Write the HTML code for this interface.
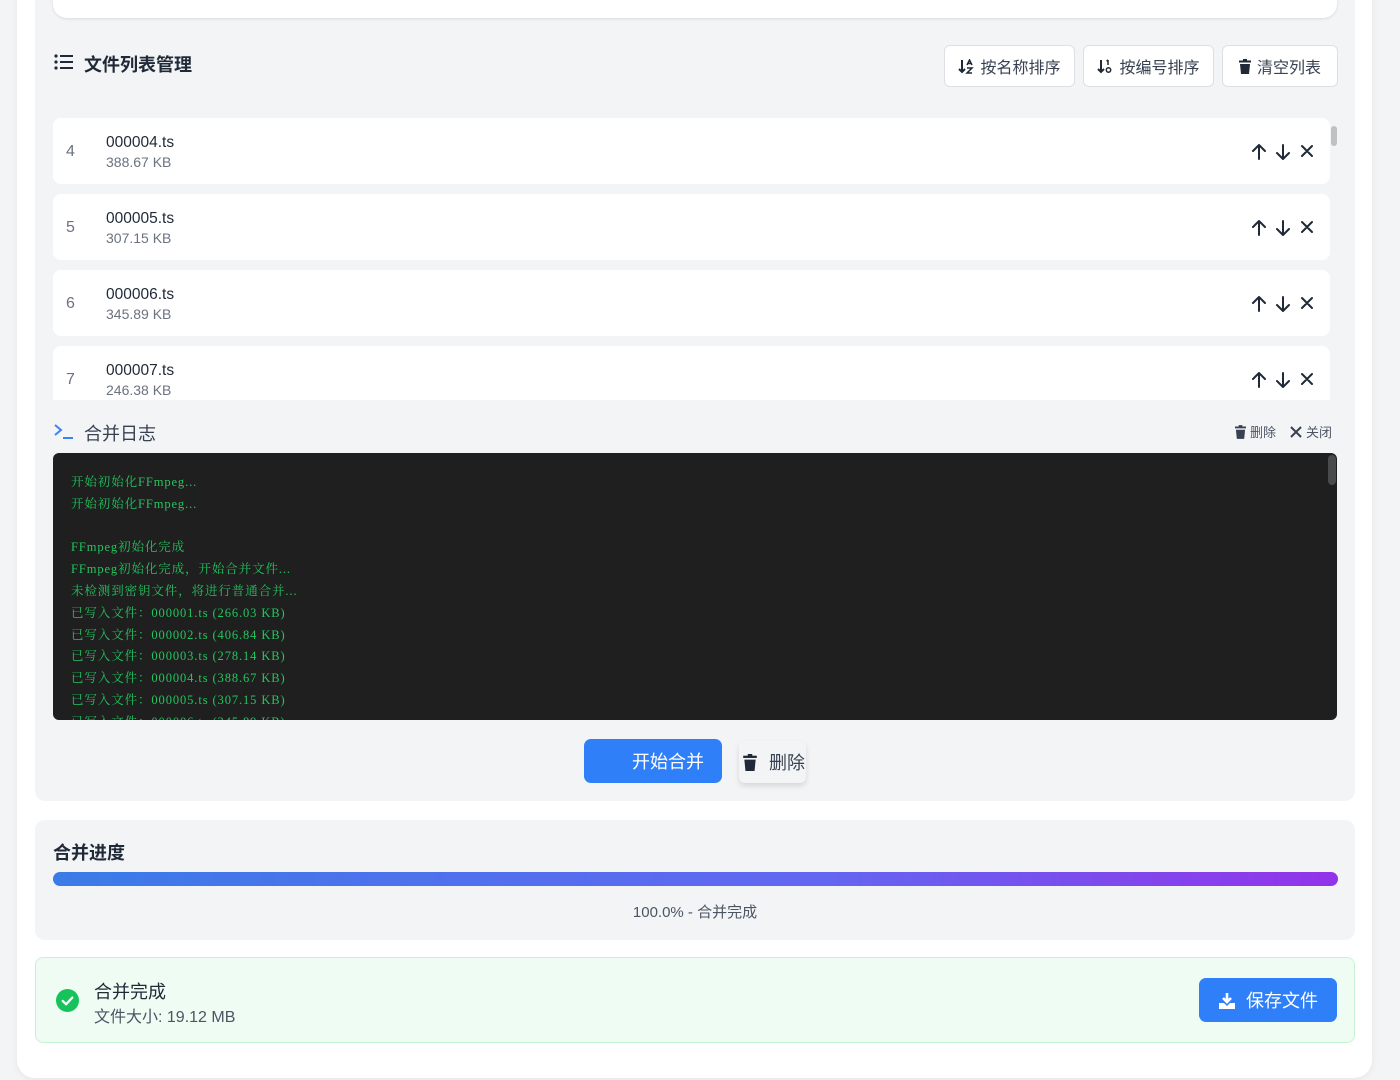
<!DOCTYPE html>
<html><head><meta charset="utf-8"><style>
*{box-sizing:border-box;margin:0;padding:0}
body{width:1400px;height:1080px;background:#f3f4f6;font-family:"Liberation Sans","Noto Sans CJK SC",sans-serif;position:relative;overflow:hidden;color:#1f2937}
.abs{position:absolute}
.card{left:17px;top:-20px;width:1355px;height:1098px;background:#fff;border-radius:0 0 18px 18px;box-shadow:0 2px 8px rgba(0,0,0,.06)}
.panel{left:35px;top:-10px;width:1320px;height:811px;background:#f3f4f6;border-radius:0 0 10px 10px}
.topcard{left:53px;top:-10px;width:1284px;height:28px;background:#fff;border-radius:0 0 14px 14px;box-shadow:0 1px 3px rgba(0,0,0,.1)}
.btn{top:45px;height:42px;background:#fff;border:1px solid #dcdfe4;border-radius:6px;font-size:16px;color:#374151;display:flex;align-items:center;justify-content:center;gap:6px;white-space:nowrap}
.item{left:53px;width:1277px;height:66px;background:#fff;border-radius:8px}
.item .n{position:absolute;left:13px;top:25px;font-size:16px;color:#6b7280}
.item .f{position:absolute;left:53px;top:16px;font-size:15.5px;color:#1f2937}
.item .s{position:absolute;left:53px;top:36px;font-size:14px;color:#6b7280}
.term{left:53px;top:453px;width:1284px;height:267px;background:#1f1f1f;border-radius:6px;overflow:hidden;padding:19px 18px;font-family:"Liberation Serif","Noto Serif CJK SC",serif;font-size:12.5px;line-height:21.8px;color:#22c55e;letter-spacing:0.9px;white-space:nowrap}
</style></head><body>
<div class="abs card"></div>
<div class="abs panel"></div>
<div class="abs topcard"></div>
<svg class="abs" style="left:54px;top:54px" width="20" height="16" viewBox="0 0 20 16"><g fill="#1f2937"><circle cx="2" cy="2" r="1.6"/><circle cx="2" cy="8" r="1.6"/><circle cx="2" cy="14" r="1.6"/><rect x="6" y="1" width="13" height="2"/><rect x="6" y="7" width="13" height="2"/><rect x="6" y="13" width="13" height="2"/></g></svg>
<div class="abs" style="left:84px;top:51px;font-size:18px;font-weight:bold;color:#1f2937">文件列表管理</div>
<div class="abs btn" style="left:944px;width:131px"><svg width="16" height="15" viewBox="0 0 16 15"><path d="M4 1v12M1 10l3 3 3-3" fill="none" stroke="#1f2937" stroke-width="2"/><path d="M9 6l2.5-5L14 6M9.5 4.5h4M9 9h5l-5 5h5" fill="none" stroke="#1f2937" stroke-width="1.5"/></svg>按名称排序</div>
<div class="abs btn" style="left:1083px;width:131px"><svg width="16" height="15" viewBox="0 0 16 15"><path d="M4 1v12M1 10l3 3 3-3" fill="none" stroke="#1f2937" stroke-width="2"/><path d="M11 1v5M9.5 2l1.5-1" fill="none" stroke="#1f2937" stroke-width="1.5"/><circle cx="11.5" cy="11" r="2.2" fill="none" stroke="#1f2937" stroke-width="1.5"/></svg>按编号排序</div>
<div class="abs btn" style="left:1222px;width:116px"><svg width="12" height="15" viewBox="0 0 12 15"><rect x="0" y="1.5" width="12" height="2" fill="#1f2937"/><rect x="4" y="0" width="4" height="2" fill="#1f2937"/><path d="M1 5h10l-1 10H2z" fill="#1f2937"/></svg>清空列表</div>
<div class="abs" style="left:1331px;top:126px;width:6px;height:20px;background:#c1c1c1;border-radius:3px"></div>
<div class="abs item" style="top:118px"><span class="n">4</span><span class="f">000004.ts</span><span class="s">388.67 KB</span></div>
<div class="abs item" style="top:194px"><span class="n">5</span><span class="f">000005.ts</span><span class="s">307.15 KB</span></div>
<div class="abs item" style="top:270px"><span class="n">6</span><span class="f">000006.ts</span><span class="s">345.89 KB</span></div>
<div class="abs item" style="top:346px;height:54px;border-radius:8px 8px 0 0"><span class="n">7</span><span class="f">000007.ts</span><span class="s">246.38 KB</span></div>
<svg class="abs" style="left:1250px;top:143px" width="66" height="260" viewBox="0 0 66 260"><g fill="none" stroke="#1f2937" stroke-width="2" stroke-linecap="round" stroke-linejoin="round">
<g id="r"><path d="M9 16V2M3 8l6-6 6 6M33 2v14M27 10l6 6 6-6M52 3l10 10M62 3L52 13"/></g>
<use href="#r" y="76"/><use href="#r" y="152"/><use href="#r" y="228"/></g></svg>
<svg class="abs" style="left:54px;top:423px" width="20" height="16" viewBox="0 0 20 16"><path d="M1 2l6 5-6 5M9 15h10" fill="none" stroke="#3b82f6" stroke-width="2"/></svg>
<div class="abs" style="left:84px;top:420px;font-size:18px;color:#374151">合并日志</div>
<div class="abs" style="left:1235px;top:422px;font-size:13px;color:#4b5563;display:flex;align-items:center;gap:4px;white-space:nowrap"><svg width="11" height="14" viewBox="0 0 12 15"><rect x="0" y="1.5" width="12" height="2" fill="#374151"/><rect x="4" y="0" width="4" height="2" fill="#374151"/><path d="M1 5h10l-1 10H2z" fill="#374151"/></svg>删除<svg style="margin-left:10px" width="12" height="12" viewBox="0 0 12 12"><path d="M1 1l10 10M11 1L1 11" stroke="#374151" stroke-width="2"/></svg>关闭</div>
<div class="abs term">开始初始化FFmpeg...<br>开始初始化FFmpeg...<br><br>FFmpeg初始化完成<br>FFmpeg初始化完成，开始合并文件...<br>未检测到密钥文件，将进行普通合并...<br>已写入文件：000001.ts (266.03 KB)<br>已写入文件：000002.ts (406.84 KB)<br>已写入文件：000003.ts (278.14 KB)<br>已写入文件：000004.ts (388.67 KB)<br>已写入文件：000005.ts (307.15 KB)<br>已写入文件：000006.ts (345.89 KB)</div>
<div class="abs" style="left:1328px;top:455px;width:8px;height:30px;background:#4a4a4a;border-radius:4px"></div>
<div class="abs" style="left:584px;top:739px;width:138px;height:44px;background:#2f7ff8;border-radius:7px;color:#fff;font-size:18px;display:flex;align-items:center;padding-left:48px;white-space:nowrap">开始合并</div>
<div class="abs" style="left:739px;top:741px;width:67px;height:42px;background:#f3f4f6;border-radius:6px;box-shadow:0 3px 6px rgba(0,0,0,.12);font-size:18px;color:#374151;display:flex;align-items:center;gap:12px;padding-left:4px;white-space:nowrap;overflow:hidden"><svg width="14" height="17" viewBox="0 0 12 15" style="flex:none"><rect x="0" y="1.5" width="12" height="2" fill="#1f2937"/><rect x="4" y="0" width="4" height="2" fill="#1f2937"/><path d="M1 5h10l-1 10H2z" fill="#1f2937"/></svg>删除</div>
<div class="abs" style="left:35px;top:820px;width:1320px;height:120px;background:#f3f4f6;border-radius:10px"></div>
<div class="abs" style="left:53px;top:839px;font-size:18px;font-weight:bold;color:#1f2937">合并进度</div>
<div class="abs" style="left:53px;top:872px;width:1285px;height:14px;border-radius:7px;background:linear-gradient(90deg,#3b7be8,#6366f1 60%,#9333ea)"></div>
<div class="abs" style="left:0;width:1390px;top:901px;text-align:center;font-size:15px;color:#4b5563">100.0% - 合并完成</div>
<div class="abs" style="left:35px;top:957px;width:1320px;height:86px;background:#effcf4;border:1px solid #c6f3d6;border-radius:8px"></div>
<svg class="abs" style="left:56px;top:989px" width="23" height="23" viewBox="0 0 24 24"><circle cx="12" cy="12" r="12" fill="#16c35a"/><path d="M7 12.5l3.5 3.5L17 9" fill="none" stroke="#fff" stroke-width="2.4" stroke-linecap="round" stroke-linejoin="round"/></svg>
<div class="abs" style="left:94px;top:978px;font-size:18px;color:#1f2937">合并完成</div>
<div class="abs" style="left:94px;top:1003px;font-size:16px;color:#4b5563">文件大小: 19.12 MB</div>
<div class="abs" style="left:1199px;top:978px;width:138px;height:44px;background:#2f7ff8;border-radius:7px;color:#fff;font-size:18px;display:flex;align-items:center;justify-content:center;gap:10px;white-space:nowrap"><svg width="18" height="17" viewBox="0 0 18 17"><path d="M9 1v9M5 6l4 4 4-4" fill="none" stroke="#fff" stroke-width="2.6"/><path d="M1 11h5l3 3 3-3h5v6H1z" fill="#fff"/></svg>保存文件</div>
</body></html>
